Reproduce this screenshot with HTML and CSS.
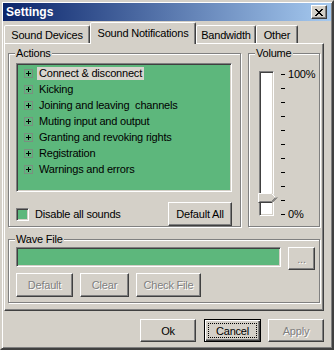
FILE: index.html
```html
<!DOCTYPE html>
<html lang="en">
<head>
    <meta charset="UTF-8">
    <title>Settings</title>
    <link rel="stylesheet" href="styles.css">
</head>
<body>
    <div class="window">
        <div class="titlebar">
            <span class="title">Settings</span>
            <span class="close">
                <svg width="8" height="7" viewBox="0 0 8 7">
                    <path d="M0 0 L7 7 M1 0 L8 7 M7 0 L0 7 M8 0 L1 7" stroke="#000" stroke-width="1"/>
                </svg>
            </span>
        </div>

        <div class="tabs">
            <div class="tab tab-devices">Sound Devices</div>
            <div class="tab tab-active tab-notify">Sound Notifications</div>
            <div class="tab tab-bandwidth">Bandwidth</div>
            <div class="tab tab-other">Other</div>
        </div>

        <div class="panel">
            <div class="top-row">
                <fieldset class="group actions">
                    <legend>Actions</legend>
                    <div class="group-body">
                        <ul class="list">
                            <li class="item"><span class="expander"></span><span class="item-text selected">Connect &amp; disconnect</span></li>
                            <li class="item"><span class="expander"></span><span class="item-text">Kicking</span></li>
                            <li class="item"><span class="expander"></span><span class="item-text">Joining and leaving&nbsp; channels</span></li>
                            <li class="item"><span class="expander"></span><span class="item-text">Muting input and output</span></li>
                            <li class="item"><span class="expander"></span><span class="item-text">Granting and revoking rights</span></li>
                            <li class="item"><span class="expander"></span><span class="item-text">Registration</span></li>
                            <li class="item"><span class="expander"></span><span class="item-text">Warnings and errors</span></li>
                        </ul>
                        <div class="actions-row">
                            <label class="check"><span class="checkbox"></span>Disable all sounds</label>
                            <button class="btn btn-default-all">Default All</button>
                        </div>
                    </div>
                </fieldset>

                <fieldset class="group volume">
                    <legend>Volume</legend>
                    <div class="group-body slider">
                        <div class="track">
                            <svg class="thumb" width="20" height="10" viewBox="0 0 20 10">
                                <path d="M0 0 L14 0 L19 5 L14 10 L0 10 Z" fill="#d4d0c8"/>
                                <path d="M0.5 9.5 L0.5 0.5 L13.5 0.5 L18 5" fill="none" stroke="#fff"/>
                                <path d="M0.5 9.5 L14 9.5 L19 4.5" fill="none" stroke="#404040"/>
                                <path d="M1.5 8.5 L13.5 8.5 L17.5 4.5" fill="none" stroke="#808080"/>
                            </svg>
                        </div>
                        <div class="ticks">
                            <div class="tick">100%</div>
                            <div class="tick"></div>
                            <div class="tick"></div>
                            <div class="tick"></div>
                            <div class="tick"></div>
                            <div class="tick"></div>
                            <div class="tick"></div>
                            <div class="tick"></div>
                            <div class="tick"></div>
                            <div class="tick"></div>
                            <div class="tick">0%</div>
                        </div>
                    </div>
                </fieldset>
            </div>

            <fieldset class="group wave">
                <legend>Wave File</legend>
                <div class="group-body">
                    <div class="wave-row">
                        <div class="textbox"></div>
                        <button class="btn btn-browse" disabled>...</button>
                    </div>
                    <div class="wave-buttons">
                        <button class="btn btn-wave-default" disabled>Default</button>
                        <button class="btn btn-clear" disabled>Clear</button>
                        <button class="btn btn-check" disabled>Check File</button>
                    </div>
                </div>
            </fieldset>
        </div>

        <div class="footer">
            <button class="btn btn-ok">Ok</button>
            <button class="btn btn-cancel">Cancel</button>
            <button class="btn btn-apply" disabled>Apply</button>
        </div>
    </div>
</body>
</html>
```

FILE: styles.css
```css
body {
    margin: 0;
    background-color: #d4d0c8;
    font-family: "Liberation Sans", Arial, sans-serif;
    font-size: 11px;
    letter-spacing: -0.2px;
    color: #000000;
}

.window {
    width: 334px;
    height: 350px;
    box-sizing: border-box;
    border: 2px solid;
    border-color: #d4d0c8 #404040 #404040 #d4d0c8;
    box-shadow: inset 1px 1px #ffffff, inset -1px -1px #808080;
    padding: 1px;
}

/* title bar */
.titlebar {
    height: 18px;
    display: flex;
    align-items: center;
    justify-content: space-between;
    padding: 0 4px 0 3px;
    background: linear-gradient(to right, #0a246a, #a6caf0);
    color: #ffffff;
}

.title {
    font-size: 12px;
    font-weight: bold;
    letter-spacing: 0;
}

.close {
    width: 16px;
    height: 14px;
    box-sizing: border-box;
    display: flex;
    align-items: center;
    justify-content: center;
    background-color: #d4d0c8;
    border: 1px solid;
    border-color: #ffffff #404040 #404040 #ffffff;
    box-shadow: inset -1px -1px #808080;
}

/* tabs */
.tabs {
    display: flex;
    align-items: flex-end;
    height: 21px;
    margin: 1px 0 0 1px;
    position: relative;
    z-index: 1;
}

.tab {
    height: 18px;
    box-sizing: border-box;
    display: flex;
    align-items: center;
    justify-content: center;
    border: 1px solid;
    border-bottom: none;
    border-color: #ffffff #404040 transparent #ffffff;
    border-radius: 2px 2px 0 0;
    box-shadow: inset -1px 0 #808080;
    background-color: #d4d0c8;
}

.tab-devices { width: 86px; }
.tab-notify { width: 106px; }
.tab-bandwidth { width: 60px; }
.tab-other { width: 42px; }

.tab-active {
    height: 22px;
    margin-bottom: -1px;
    padding-bottom: 1px;
}

/* panel */
.panel {
    margin: 0 7px 0 1px;
    border: 1px solid;
    border-color: #ffffff #404040 #404040 #ffffff;
    box-shadow: inset -1px -1px #808080;
    padding: 3px 3px 7px 3px;
}

.top-row {
    display: flex;
    gap: 7px;
}

.group {
    margin: 0;
    padding: 0;
    min-width: 0;
    box-sizing: border-box;
    border: 1px solid #808080;
    box-shadow: inset 1px 1px #ffffff, 1px 1px #ffffff;
}

.group legend {
    margin-left: 6px;
    padding: 0 1px;
    line-height: 12px;
    background-color: #d4d0c8;
}

.actions {
    width: 233px;
    flex: none;
}

.actions .group-body {
    padding: 4px 8px 0 7px;
}

.list {
    margin: 0;
    padding: 1px 0 0 7px;
    list-style: none;
    height: 129px;
    box-sizing: border-box;
    background-color: #5db77c;
    border: 1px solid;
    border-color: #808080 #ffffff #ffffff #808080;
    box-shadow: inset 1px 1px #404040, inset -1px -1px #d4d0c8;
}

.item {
    display: flex;
    align-items: center;
    height: 16px;
}

.expander {
    width: 9px;
    height: 9px;
    box-sizing: border-box;
    margin-right: 4px;
    border: 1px solid #7a8f80;
    background:
        linear-gradient(#000, #000) center / 5px 1px no-repeat,
        linear-gradient(#000, #000) center / 1px 5px no-repeat;
}

.item-text {
    padding: 0 2px;
    line-height: 13px;
}

.selected {
    background-color: #d8d5ce;
}

.actions-row {
    display: flex;
    align-items: center;
    justify-content: space-between;
    margin-top: 10px;
}

.check {
    display: flex;
    align-items: center;
    gap: 6px;
}

.checkbox {
    width: 13px;
    height: 13px;
    box-sizing: border-box;
    background-color: #5db77c;
    border: 1px solid;
    border-color: #808080 #ffffff #ffffff #808080;
    box-shadow: inset 1px 1px #404040, inset -1px -1px #d4d0c8;
}

/* buttons */
.btn {
    margin: 0;
    padding: 0;
    height: 24px;
    box-sizing: border-box;
    font-family: inherit;
    font-size: 11px;
    letter-spacing: -0.2px;
    color: #000000;
    background-color: #d4d0c8;
    border: 1px solid;
    border-color: #ffffff #404040 #404040 #ffffff;
    box-shadow: inset -1px -1px #808080;
}

.btn:disabled {
    color: #808080;
    text-shadow: 1px 1px #ffffff;
}

.btn-default-all { width: 64px; }

/* volume slider */
.volume {
    flex: 1;
}

.slider {
    display: flex;
    padding: 12px 0 0 10px;
}

.track {
    position: relative;
    width: 15px;
    height: 145px;
    box-sizing: border-box;
    background-color: #ffffff;
    border: 1px solid;
    border-color: #808080 #ffffff #ffffff #808080;
    box-shadow: inset 1px 1px #404040, inset -1px -1px #d4d0c8;
}

.thumb {
    position: absolute;
    left: -2px;
    top: 121px;
}

.ticks {
    margin: -4px 0 0 7px;
}

.tick {
    height: 14px;
    display: flex;
    align-items: center;
}

.tick::before {
    content: "";
    width: 4px;
    height: 1px;
    margin-right: 3px;
    background-color: #000000;
}

/* wave file */
.wave {
    margin-top: 6px;
}

.wave .group-body {
    padding: 2px 4px 5px 7px;
}

.wave-row {
    display: flex;
    align-items: flex-start;
    gap: 7px;
}

.textbox {
    width: 265px;
    height: 20px;
    box-sizing: border-box;
    background-color: #5db77c;
    border: 1px solid;
    border-color: #808080 #ffffff #ffffff #808080;
    box-shadow: inset 1px 1px #404040, inset -1px -1px #d4d0c8;
}

.btn-browse {
    width: 27px;
    height: 23px;
}

.wave-buttons {
    display: flex;
    gap: 7px;
    margin-top: 3px;
}

.btn-wave-default { width: 57px; }
.btn-clear { width: 49px; }
.btn-check { width: 65px; }

/* footer */
.footer {
    display: flex;
    justify-content: flex-end;
    gap: 7px;
    margin: 8px 7px 0 0;
}

.footer .btn {
    height: 23px;
}

.btn-ok { width: 56px; margin-right: 1px; }
.btn-apply { width: 56px; }

.btn-cancel {
    width: 57px;
    position: relative;
    border-color: #000000;
    box-shadow: inset 1px 1px #ffffff, inset -1px -1px #404040, inset -2px -2px #808080;
}

.btn-cancel::after {
    content: "";
    position: absolute;
    inset: 3px;
    border: 1px dotted #000000;
}
```
